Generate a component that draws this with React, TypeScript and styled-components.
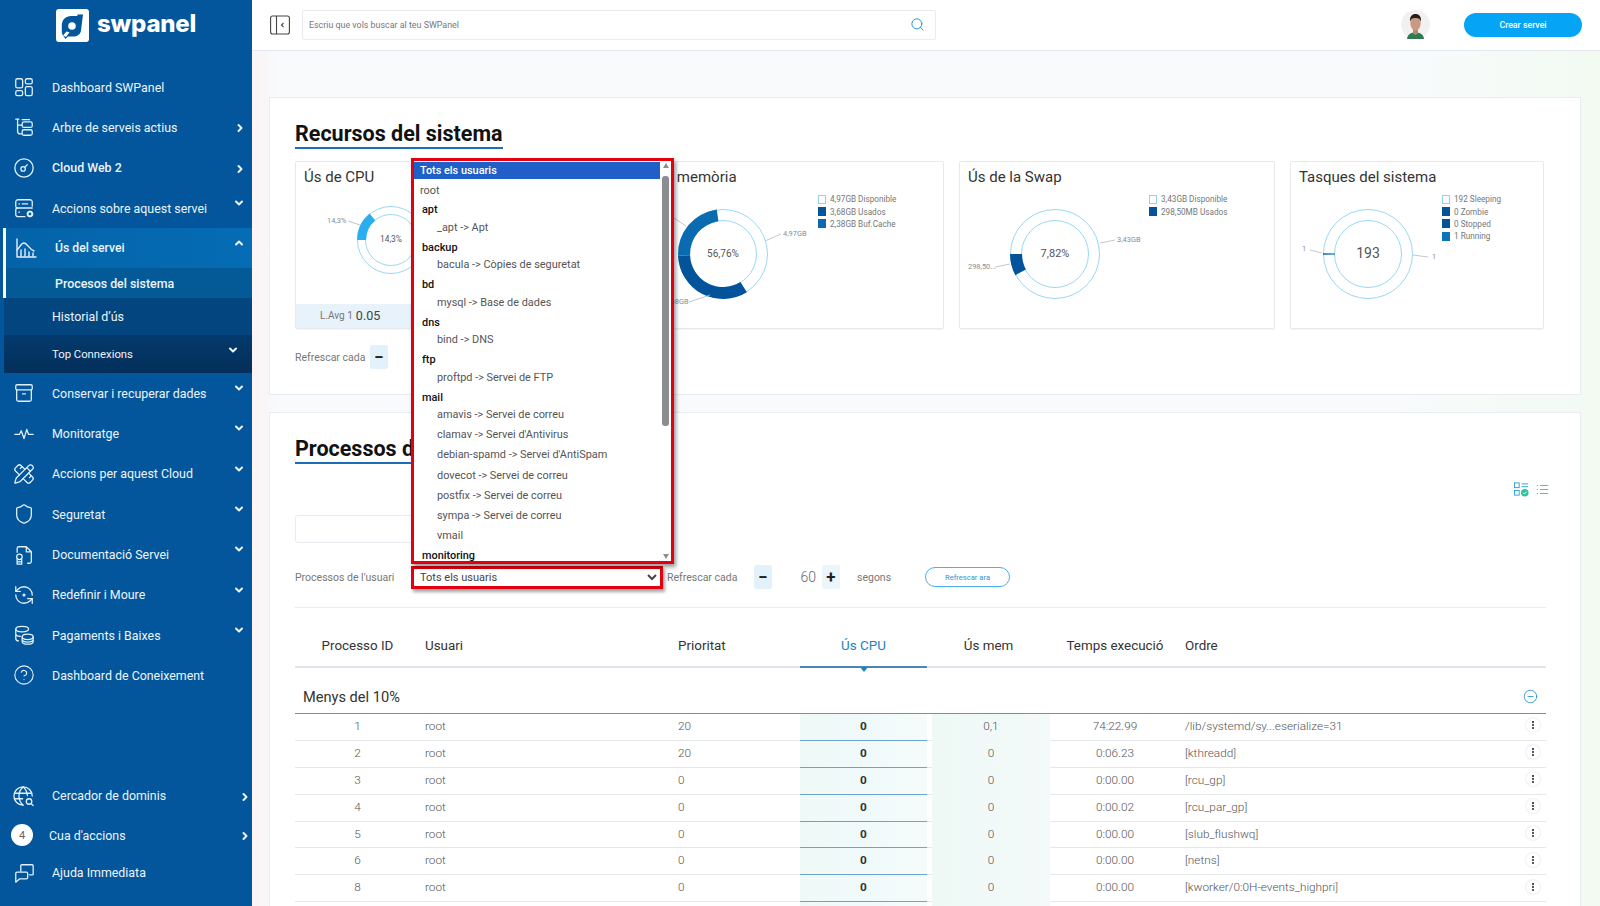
import React from 'react';
import styled, { createGlobalStyle, css } from 'styled-components';
import {
  ChevronDown,
  ChevronRight,
  ChevronUp,
  CircleHelp,
  CircleMinus,
  EllipsisVertical,
  PencilRuler,
  RefreshCcwDot,
  Search,
  Shield,
} from 'lucide-react';

const GlobalStyle = createGlobalStyle`
  html, body { margin: 0; padding: 0; height: 100%; }
  body { font-family: Roboto, "Liberation Sans", sans-serif; color: #333; background: #fff; }
  * { box-sizing: border-box; }
`;

const Shell = styled.div`
  display: flex;
  width: 1600px;
  height: 906px;
  overflow: hidden;
`;

/* ---------- sidebar ---------- */

const Sidebar = styled.aside`
  flex: 0 0 252px;
  display: flex;
  flex-direction: column;
  background: #03569b;
  color: #edf4fa;
  padding-bottom: 15px;
`;

const LogoRow = styled.div`
  height: 67px;
  display: flex;
  align-items: flex-start;
  gap: 8px;
  padding: 9px 0 0 56px;
`;

const LogoText = styled.span`
  font-family: Inter, Roboto, sans-serif;
  font-weight: 800;
  font-size: 24px;
  line-height: 29px;
  color: #fff;
  letter-spacing: -0.2px;
`;

const NavIcon = styled.span`
  flex: 0 0 39px;
  display: flex;
  align-items: center;
  color: #e4f0f9;
`;

const NavRow = styled.div<{ $active?: boolean; $strong?: boolean; $h?: number }>`
  height: ${(p) => p.$h ?? 40.3}px;
  display: flex;
  align-items: center;
  padding: 0 5px 0 13px;
  font-size: 12.4px;
  font-weight: ${(p) => (p.$strong ? 500 : 400)};
  ${(p) =>
    p.$active &&
    css`
      margin-left: 3px;
      padding-left: 8px;
      border-left: 3px solid #fff;
      font-size: 12.2px;
      background: linear-gradient(90deg, #0463a8, #056cb5);
      ${NavIcon} {
        flex-basis: 41px;
      }
    `}
`;

const NavLabel = styled.span`
  flex: 1;
  white-space: nowrap;
`;

const ChevronDownSlot = styled.span`
  align-self: flex-start;
  margin: 9px 2px 0 0;
  display: flex;
`;

const ChevronRightSlot = styled.span<{ $far?: boolean }>`
  margin: 2px ${(p) => (p.$far ? -4 : 1)}px 0 0;
  display: flex;
`;

const SubRow = styled.div<{ $tone: 'current' | 'dark' | 'darker'; $h: number }>`
  height: ${(p) => p.$h}px;
  margin-left: ${(p) => (p.$tone === 'current' ? 3 : 4)}px;
  display: flex;
  align-items: center;
  font-size: ${(p) => (p.$tone === 'darker' ? 11.3 : 12.4)}px;
  padding-left: ${(p) => (p.$tone === 'current' ? 49 : 48)}px;
  padding-right: 13px;
  font-weight: ${(p) => (p.$tone === 'current' ? 500 : 400)};
  border-left: ${(p) => (p.$tone === 'current' ? '3px solid #fff' : '0')};
  background: ${(p) =>
    p.$tone === 'current' ? '#045a97' : p.$tone === 'dark' ? '#03467f' : 'linear-gradient(#033a6d, #032f5a)'};
`;

const SubChevron = styled.span`
  margin: -9px 0 0 auto;
  display: flex;
`;

const SideSpacer = styled.div`
  flex: 1;
`;

const Badge = styled.span`
  width: 22px;
  height: 22px;
  margin-left: -2px;
  margin-right: 16px;
  flex: none;
  display: flex;
  align-items: center;
  justify-content: center;
  border-radius: 50%;
  background: #fff;
  color: #666;
  font-size: 11px;
`;

/* ---------- main column ---------- */

const Main = styled.main`
  flex: 1;
  display: flex;
  flex-direction: column;
  min-width: 0;
  background:
    linear-gradient(90deg, #fcf3f4 0, rgba(247, 250, 252, 0) 2%),
    linear-gradient(90deg, #f8fafc 0, #f8fafc 85%, #f3faf2 100%);
`;

const Topbar = styled.header`
  flex: 0 0 51px;
  display: flex;
  align-items: center;
  padding: 0 18px 1px 18px;
  background: #fff;
  border-bottom: 1px solid #e4e9f1;
`;

const SearchBox = styled.div`
  width: 634px;
  height: 30px;
  margin-left: 12px;
  display: flex;
  align-items: center;
  justify-content: space-between;
  padding: 0 10px 0 6px;
  border: 1px solid #e8ecf0;
  border-radius: 2px;
  font-size: 8.9px;
  color: #777;
`;

const Avatar = styled.span`
  margin-left: auto;
  display: flex;
`;

const CreateButton = styled.button`
  width: 118px;
  height: 24px;
  margin-left: 34px;
  border: 0;
  border-radius: 12px;
  background: #05a4f5;
  color: #fff;
  font: 500 8.8px Roboto, sans-serif;
`;

const Content = styled.div`
  flex: 1;
  padding: 46px 19px 0 17px;
  display: flex;
  flex-direction: column;
  gap: 17px;
`;

const Card = styled.section<{ $h?: number }>`
  ${(p) => p.$h && `height: ${p.$h}px;`}
  flex: none;
  background: #fff;
  border: 1px solid #e9edf2;
  padding: 23px 34px 0 25px;
`;

const Title = styled.h2`
  display: inline-block;
  margin: 0;
  font-size: 21.5px;
  line-height: 26px;
  font-weight: 700;
  color: #111;
  border-bottom: 2px solid #1c6fb5;
`;

const ChartRow = styled.div`
  display: flex;
  gap: 15px;
  margin-top: 12px;
  height: 168px;
`;

const ChartCard = styled.div<{ $w: number }>`
  flex: 0 0 ${(p) => p.$w}px;
  display: flex;
  flex-direction: column;
  border: 1px solid #e6eaef;
  border-radius: 2px;
  box-shadow: 0 1px 1px rgba(20, 50, 80, 0.05);
`;

const ChartTitle = styled.h3`
  margin: 0;
  height: 29px;
  padding: 6px 0 0 8px;
  font-size: 15px;
  line-height: 19px;
  font-weight: 400;
  color: #333;
  white-space: nowrap;
`;

const ChartBody = styled.div`
  flex: 1;
  display: flex;
  min-height: 0;
`;

const Legend = styled.ul`
  list-style: none;
  margin: 2px 0 0;
  padding: 0;
`;

const LegendItem = styled.li`
  height: 12.4px;
  display: flex;
  align-items: center;
  gap: 4px;
  font-size: 8.2px;
  color: #777;
  white-space: nowrap;
`;

const Swatch = styled.i<{ $color?: string }>`
  width: 8px;
  height: 9px;
  background: ${(p) => p.$color ?? '#fff'};
  border: 1px solid ${(p) => p.$color ?? '#8ed3f0'};
`;

const ChartFooter = styled.div`
  flex: 0 0 24px;
  display: flex;
  align-items: center;
  padding-left: 24px;
  padding-bottom: 2px;
  gap: 3px;
  background: #e7f2fa;
  font-size: 10px;
  color: #777;
`;

const FooterValue = styled.b`
  font-weight: 400;
  font-size: 12.6px;
  color: #444;
`;

const RefreshRow = styled.div`
  display: flex;
  align-items: center;
  margin-top: 16px;
`;

const ControlLabel = styled.span<{ $w: number }>`
  flex: 0 0 ${(p) => p.$w}px;
  font-size: 10.5px;
  color: #777;
  white-space: nowrap;
`;

const Stepper = styled.div`
  flex: 0 0 86px;
  height: 24px;
  display: flex;
  align-items: center;
  justify-content: flex-end;
  background: #fff;
  font-size: 14px;
  font-weight: 300;
  color: #666;
`;

const StepButton = styled.span<{ $side: 'minus' | 'plus' }>`
  flex: 0 0 18px;
  height: 24px;
  display: flex;
  align-items: center;
  justify-content: center;
  font-size: 17px;
  font-weight: 700;
  line-height: 1;
  color: #222;
  background: ${(p) => (p.$side === 'minus' ? '#e3f2fa' : '#ebf6fb')};
  border-radius: 2px;
`;

const StepValue = styled.span`
  flex: 1;
  text-align: right;
  padding-right: 6px;
`;

const Seconds = styled.span`
  margin-left: 17px;
  width: 68px;
  font-size: 10.5px;
  color: #777;
`;

const RefreshNow = styled.button`
  width: 85px;
  height: 20px;
  border: 1px solid #4eb0e6;
  border-radius: 10px;
  background: #fff;
  color: #2b97d6;
  font: 400 7.6px Roboto, sans-serif;
`;

const ViewIcons = styled.div`
  height: 16px;
  margin: 17px -3px 0 0;
  display: flex;
  justify-content: flex-end;
  align-items: center;
  gap: 7px;
`;

const FilterInput = styled.div`
  width: 270px;
  height: 28px;
  margin-top: 18px;
  border: 1px solid #e8ecf0;
  border-radius: 3px;
`;

const Controls = styled.div`
  height: 24px;
  margin-top: 22px;
  display: flex;
  align-items: center;
`;

const SelectWrap = styled.div`
  position: relative;
  flex: 0 0 252px;
  height: 23px;
  margin-right: 4px;
`;

const NativeSelect = styled.select`
  width: 100%;
  height: 100%;
  padding: 0 2px 0 2px;
  border: 3px solid #e3000f;
  border-radius: 0;
  outline: 0;
  background: #fff;
  box-shadow: 2px 3px 3px rgba(0, 0, 0, 0.35);
  font: 400 11px Roboto, sans-serif;
  color: #444;
`;

/* popup list of the native select, open above it */
const Popup = styled.div`
  position: absolute;
  left: 0;
  bottom: 25px;
  width: 263px;
  height: 406px;
  z-index: 5;
  display: flex;
  background: #fff;
  border: 3px solid #e3000f;
  box-shadow: 2px 3px 4px rgba(0, 0, 0, 0.4);
`;

const OptionList = styled.div`
  flex: 1;
  overflow: hidden;
  padding-top: 1px;
  font-size: 10.9px;
  min-width: 0;
`;

const Selected = styled.div`
  height: 17px;
  line-height: 17px;
  padding-left: 6px;
  background: #1f5fc7;
  color: #fff;
  font-weight: 500;
`;

const Root = styled.div`
  height: 17.7px;
  line-height: 17.7px;
  margin-top: 3px;
  padding-left: 6px;
  color: #555;
`;

const GroupLabel = styled.div`
  height: 17.7px;
  line-height: 17.7px;
  margin-top: 2.1px;
  padding-left: 8px;
  font-weight: 500;
  color: #111;
`;

const GroupOption = styled.div`
  height: 17.7px;
  line-height: 17.7px;
  padding-left: 23px;
  color: #555;
  & + & {
    margin-top: 2.4px;
  }
`;

const ScrollTrack = styled.div`
  flex: 0 0 11px;
  display: flex;
  flex-direction: column;
  align-items: center;
  justify-content: space-between;
  padding: 2px 0;
`;

const ScrollThumb = styled.div`
  width: 7px;
  height: 250px;
  margin-top: 8px;
  border-radius: 3px;
  background: #8b8d90;
`;

const ScrollGap = styled.div`
  flex: 1;
`;

const ScrollArrow = styled.i<{ $up?: boolean }>`
  width: 0;
  height: 0;
  border-left: 3.5px solid transparent;
  border-right: 3.5px solid transparent;
  ${(p) => (p.$up ? 'border-bottom' : 'border-top')}: 5px solid #8b8d90;
`;

const Divider = styled.hr`
  margin: 18px 0 0;
  border: 0;
  border-top: 1px solid #e8ecf1;
`;

const gridColumns = css`
  display: grid;
  grid-template-columns: 125px 253px 127px 127px 123px 130px 1fr 26px;
`;

const HeadRow = styled.div`
  ${gridColumns}
  height: 60px;
  border-bottom: 2px solid #dfe4ef;
  font-size: 13.4px;
  color: #333;
`;

const HeadCell = styled.div<{ $left?: boolean; $active?: boolean }>`
  position: relative;
  display: flex;
  align-items: center;
  justify-content: ${(p) => (p.$left ? 'flex-start' : 'center')};
  padding: 16px 0 0 ${(p) => (p.$left ? 5 : 0)}px;
  white-space: nowrap;
  ${(p) =>
    p.$active &&
    css`
      color: #1a84c4;
      margin-bottom: -2px;
      border-bottom: 2px solid #4b86b8;
      &::after {
        content: '';
        position: absolute;
        left: 50%;
        bottom: -6px;
        margin-left: -4px;
        border-left: 4px solid transparent;
        border-right: 4px solid transparent;
        border-top: 5px solid #1a84c4;
      }
    `}
`;

const GroupRow = styled.div`
  height: 46px;
  display: flex;
  align-items: center;
  justify-content: space-between;
  padding: 12px 8px 0;
  border-bottom: 1px solid #858d92;
  font-size: 14.6px;
  color: #333;
`;

const TableRow = styled.div`
  ${gridColumns}
  height: 26.9px;
  border-bottom: 1px solid #e3e8ef;
  font-size: 11.8px;
  font-weight: 300;
  color: #555;
`;

const Cell = styled.div<{ $left?: boolean }>`
  display: flex;
  align-items: center;
  justify-content: ${(p) => (p.$left ? 'flex-start' : 'center')};
  padding: 0 0 2px ${(p) => (p.$left ? 5 : 0)}px;
  white-space: nowrap;
`;

const CpuCell = styled(Cell)`
  margin-bottom: -1px;
  background: linear-gradient(90deg, #eff9f8, #f1fafa 60%, #f5fbfb);
  border-bottom: 1px solid #6fa3c9;
  font-weight: 700;
  color: #333;
`;

const MemCell = styled(Cell)`
  margin-left: 5px;
  margin-bottom: -1px;
  padding-bottom: 3px;
  background: linear-gradient(90deg, #eef9f6, #f3faf9);
`;

const Kebab = styled.span`
  width: 14px;
  height: 14px;
  margin-top: -1px;
  display: flex;
  align-items: center;
  justify-content: center;
  border-radius: 50%;
  background: #fff;
  box-shadow: 0 0 2px rgba(0, 0, 0, 0.18);
  color: #222;
`;

/* ---------- drawings ---------- */

const Stroke = ({ children, size = 22 }: { children: React.ReactNode; size?: number }) => (
  <svg width={size} height={size} viewBox="0 0 24 24" fill="none" stroke="currentColor" strokeWidth="1.4" strokeLinecap="round" strokeLinejoin="round">
    {children}
  </svg>
);

const icons: Record<string, React.ReactNode> = {
  dashboard: (
    <Stroke>
      <rect x="3" y="3" width="7.5" height="10" rx="1.8" />
      <rect x="13.5" y="3" width="7.5" height="5.5" rx="1.8" />
      <rect x="3" y="16" width="7.5" height="5.5" rx="1.8" />
      <rect x="13.5" y="11.5" width="7.5" height="10" rx="1.8" />
    </Stroke>
  ),
  tree: (
    <Stroke>
      <path d="M3 3.5h3.5M5 3.5v13a3 3 0 0 0 3 3h2M5 10h5" />
      <rect x="10" y="6.5" width="11" height="6" rx="2" />
      <rect x="10" y="15" width="11" height="6" rx="2" />
      <path d="M10 4h8" />
    </Stroke>
  ),
  gauge: (
    <Stroke>
      <circle cx="12" cy="12" r="10" />
      <circle cx="11" cy="13" r="2.4" />
      <path d="M13 11l2.5-2.5" />
    </Stroke>
  ),
  server: (
    <Stroke>
      <path d="M21 10V5.5A2.5 2.5 0 0 0 18.500 3h-13A2.500 2.500 0 0 0 3 5.500V10a2 2 0 0 0 2 2h16" />
      <path d="M5 12a2 2 0 0 0-2 2v5a2.500 2.500 0 0 0 2.500 2.500H13" />
      <path d="M6.500 7.500h.5M6.500 16.500h.5M10 7.500h6" />
      <circle cx="18.500" cy="18.500" r="2.600" strokeWidth="2.200" strokeDasharray="1.700 0.900" />
    </Stroke>
  ),
  usage: (
    <Stroke size={24}>
      <path d="M3 3v18h19" />
      <path d="M3 14c3-3 4-7 7-7s5 6 10 8" />
      <path d="M7 20v-6M11 20v-7M15 20v-4M19 20v-3" />
    </Stroke>
  ),
  archive: (
    <Stroke>
      <rect x="3" y="3" width="18" height="5.500" rx="1.500" />
      <path d="M4 8.500V19a2 2 0 0 0 2 2h12a2 2 0 0 0 2-2V8.500M10.500 13h3" />
    </Stroke>
  ),
  pulse: (
    <Stroke>
      <path d="M2 12.500h5l2-4 3 8.500 3-10 2 5.500h5" />
    </Stroke>
  ),
  tools: <PencilRuler size={22} strokeWidth={1.4} />,
  shield: <Shield size={22} strokeWidth={1.4} />,
  doc: (
    <Stroke>
      <path d="M4.500 9V5a2 2 0 0 1 2-2h8l5.500 5.500V19a2 2 0 0 1-2 2h-2M14.500 3v5.500H20" />
      <circle cx="7" cy="14" r="3" />
      <path d="M4.500 22v-5.500M9.500 22v-5.500M4.500 19.500h5M4.500 22h5" />
    </Stroke>
  ),
  refresh: <RefreshCcwDot size={22} strokeWidth={1.4} />,
  pay: (
    <Stroke>
      <ellipse cx="10" cy="5.500" rx="7" ry="3" />
      <path d="M3 5.500v10a3 3 0 0 0 3 3M3 10.500c0 1.500 2 2.700 5 3" />
      <ellipse cx="16" cy="14" rx="6" ry="3" />
      <path d="M10 14v5c0 1.700 2.700 3 6 3s6-1.300 6-3v-5M10 17c0 1.500 2.700 2.700 6 2.700s6-1.200 6-2.700" />
    </Stroke>
  ),
  help: <CircleHelp size={22} strokeWidth={1.2} />,
  domains: (
    <Stroke>
      <path d="M11 22a10 10 0 1 1 10-10" />
      <path d="M11 2c-6 5.500-6 14.500 0 20M11 2c3 2.800 4.500 6 4.700 9.500M1.500 9h19M1.500 15h9" />
      <circle cx="17.500" cy="18" r="3" />
      <path d="M20 20.500l2 2" />
    </Stroke>
  ),
  chat: (
    <Stroke>
      <path d="M8.500 10V4a1 1 0 0 1 1-1H21a1 1 0 0 1 1 1v9a1 1 0 0 1-1 1h-3" />
      <path d="M3 22v-9.500a1.500 1.500 0 0 1 1.500-1.500h10a1.500 1.500 0 0 1 1.500 1.500V17a1.500 1.500 0 0 1-1.500 1.500H7z" />
    </Stroke>
  ),
};

const LogoMark = () => (
  <svg width="33" height="33" viewBox="0 0 33 33">
    <rect width="33" height="33" rx="3" fill="#fff" />
    <path
      fill="#03569b"
      d="M21.500 5.500h5.500l-2 16c-.6 4-4 6-8 6h-5l-2.500 2.500-2.500-3.500c-1-1.300-1.200-3-1.200-5v-5C5.800 10.500 10 7 15 7h6.300z"
    />
    <circle cx="16" cy="17" r="3.800" fill="#fff" />
    <path d="M7 26.500l3.500-4 3 .8-3.500 4.700z" fill="#fff" />
  </svg>
);

const AvatarFace = () => (
  <svg width="29" height="29" viewBox="0 0 29 29">
    <circle cx="14.500" cy="14.500" r="14.500" fill="#f3f1f0" />
    <path d="M6 29c.5-5 4-6.500 8.500-6.500S22.500 24 23 29z" fill="#2f7a50" />
    <path d="M12 19h5v4.500l-2.500 1.500-2.500-1.500z" fill="#b98670" />
    <ellipse cx="14.500" cy="13" rx="5.200" ry="7.400" fill="#c99a82" />
    <path d="M9 11.500C8.500 6.500 11 4 14.500 4s6 2.500 5.500 7.500c-1-2.500-2-3.500-5.500-3.500S10 9 9 11.500z" fill="#251d19" />
  </svg>
);

const polar = (cx: number, cy: number, r: number, deg: number) => {
  const a = ((deg - 90) * Math.PI) / 180;
  return [cx + r * Math.cos(a), cy + r * Math.sin(a)];
};

const arc = (cx: number, cy: number, ro: number, ri: number, from: number, to: number) => {
  const [x1, y1] = polar(cx, cy, ro, from);
  const [x2, y2] = polar(cx, cy, ro, to);
  const [x3, y3] = polar(cx, cy, ri, to);
  const [x4, y4] = polar(cx, cy, ri, from);
  const large = to - from > 180 ? 1 : 0;
  return `M${x1} ${y1}A${ro} ${ro} 0 ${large} 1 ${x2} ${y2}L${x3} ${y3}A${ri} ${ri} 0 ${large} 0 ${x4} ${y4}Z`;
};

type Donut = {
  w: number;
  cx: number;
  cy: number;
  ro: number;
  ri: number;
  center: string;
  centerSize: number;
  segments: { from: number; to: number; color: string }[];
  labels: { x: number; y: number; text: string; line: string; size?: number }[];
};

const DonutSvg = styled.svg`
  flex: none;
`;

const DonutChart = ({ w, cx, cy, ro, ri, center, centerSize, segments, labels }: Donut) => (
  <DonutSvg width={w} height={120}>
    <circle cx={cx} cy={cy} r={ro - 0.5} fill="none" stroke="#8fd3f0" strokeWidth="0.9" />
    <circle cx={cx} cy={cy} r={ri + 0.5} fill="none" stroke="#8fd3f0" strokeWidth="0.9" />
    {segments.map((s) => (
      <path key={s.from} d={arc(cx, cy, ro, ri, s.from, s.to)} fill={s.color} />
    ))}
    {labels.map((l) => (
      <g key={l.text + l.x}>
        <path d={l.line} fill="none" stroke="#b5b9bd" strokeWidth="0.8" />
        <text x={l.x} y={l.y} fontSize={l.size ?? 7.4} fill="#8a8d90" fontFamily="Roboto, sans-serif" dominantBaseline="middle">
          {l.text}
        </text>
      </g>
    ))}
    <text x={cx} y={cy} fontSize={centerSize} fill="#555" fontFamily="Roboto, sans-serif" textAnchor="middle" dominantBaseline="middle">
      {center}
    </text>
  </DonutSvg>
);

/* ---------- data ---------- */

const sideTop: { label: string; icon: string; arrow?: 'right' | 'down'; strong?: boolean }[] = [
  { label: 'Dashboard SWPanel', icon: 'dashboard' },
  { label: 'Arbre de serveis actius', icon: 'tree', arrow: 'right' },
  { label: 'Cloud Web 2', icon: 'gauge', arrow: 'right', strong: true },
  { label: 'Accions sobre aquest servei', icon: 'server', arrow: 'down' },
];

const sideMiddle: { label: string; icon: string; arrow?: 'down' }[] = [
  { label: 'Conservar i recuperar dades', icon: 'archive', arrow: 'down' },
  { label: 'Monitoratge', icon: 'pulse', arrow: 'down' },
  { label: 'Accions per aquest Cloud', icon: 'tools', arrow: 'down' },
  { label: 'Seguretat', icon: 'shield', arrow: 'down' },
  { label: 'Documentació Servei', icon: 'doc', arrow: 'down' },
  { label: 'Redefinir i Moure', icon: 'refresh', arrow: 'down' },
  { label: 'Pagaments i Baixes', icon: 'pay', arrow: 'down' },
  { label: 'Dashboard de Coneixement', icon: 'help' },
];

const groups: { name: string; options: string[] }[] = [
  { name: 'apt', options: ['_apt -> Apt'] },
  { name: 'backup', options: ['bacula -> Còpies de seguretat'] },
  { name: 'bd', options: ['mysql -> Base de dades'] },
  { name: 'dns', options: ['bind -> DNS'] },
  { name: 'ftp', options: ['proftpd -> Servei de FTP'] },
  {
    name: 'mail',
    options: [
      'amavis -> Servei de correu',
      "clamav -> Servei d'Antivirus",
      "debian-spamd -> Servei d'AntiSpam",
      'dovecot -> Servei de correu',
      'postfix -> Servei de correu',
      'sympa -> Servei de correu',
      'vmail',
    ],
  },
  { name: 'monitoring', options: [] },
];

const rows = [
  ['1', 'root', '20', '0', '0,1', '74:22.99', '/lib/systemd/sy...eserialize=31'],
  ['2', 'root', '20', '0', '0', '0:06.23', '[kthreadd]'],
  ['3', 'root', '0', '0', '0', '0:00.00', '[rcu_gp]'],
  ['4', 'root', '0', '0', '0', '0:00.02', '[rcu_par_gp]'],
  ['5', 'root', '0', '0', '0', '0:00.00', '[slub_flushwq]'],
  ['6', 'root', '0', '0', '0', '0:00.00', '[netns]'],
  ['8', 'root', '0', '0', '0', '0:00.00', '[kworker/0:0H-events_highpri]'],
  // the next row only shows its tinted cells above the fold
  ['', '', '', '', '', '', ''],
];

const App = () => (
  <Shell>
    <GlobalStyle />
    <Sidebar>
      <LogoRow>
        <LogoMark />
        <LogoText>swpanel</LogoText>
      </LogoRow>
      {sideTop.map((item) => (
        <NavRow key={item.label} $strong={item.strong}>
          <NavIcon>{icons[item.icon]}</NavIcon>
          <NavLabel>{item.label}</NavLabel>
          {item.arrow === 'right' && (
            <ChevronRightSlot>
              <ChevronRight size={12} strokeWidth={4} />
            </ChevronRightSlot>
          )}
          {item.arrow === 'down' && (
            <ChevronDownSlot>
              <ChevronDown size={12} strokeWidth={4} />
            </ChevronDownSlot>
          )}
        </NavRow>
      ))}
      <NavRow $active $strong $h={40}>
        <NavIcon>{icons.usage}</NavIcon>
        <NavLabel>Ús del servei</NavLabel>
        <ChevronDownSlot>
          <ChevronUp size={12} strokeWidth={4} />
        </ChevronDownSlot>
      </NavRow>
      <SubRow $tone="current" $h={30}>Procesos del sistema</SubRow>
      <SubRow $tone="dark" $h={37}>Historial d’ús</SubRow>
      <SubRow $tone="darker" $h={38}>
        Top Connexions
        <SubChevron>
          <ChevronDown size={12} strokeWidth={4} />
        </SubChevron>
      </SubRow>
      {sideMiddle.map((item) => (
        <NavRow key={item.label}>
          <NavIcon>{icons[item.icon]}</NavIcon>
          <NavLabel>{item.label}</NavLabel>
          {item.arrow && (
            <ChevronDownSlot>
              <ChevronDown size={12} strokeWidth={4} />
            </ChevronDownSlot>
          )}
        </NavRow>
      ))}
      <SideSpacer />
      <NavRow>
        <NavIcon>{icons.domains}</NavIcon>
        <NavLabel>Cercador de dominis</NavLabel>
        <ChevronRightSlot $far>
          <ChevronRight size={12} strokeWidth={4} />
        </ChevronRightSlot>
      </NavRow>
      <NavRow $h={38}>
        <Badge>4</Badge>
        <NavLabel>Cua d'accions</NavLabel>
        <ChevronRightSlot $far>
          <ChevronRight size={12} strokeWidth={4} />
        </ChevronRightSlot>
      </NavRow>
      <NavRow $h={37}>
        <NavIcon>{icons.chat}</NavIcon>
        <NavLabel>Ajuda Immediata</NavLabel>
      </NavRow>
    </Sidebar>

    <Main>
      <Topbar>
        <svg width="20" height="20" viewBox="0 0 20 20" fill="none" stroke="#444" strokeWidth="1.1">
          <rect x="0.600" y="1" width="18.800" height="18" rx="2" />
          <path d="M6.500 1v18M13.500 8l-2 2 2 2" />
        </svg>
        <SearchBox>
          <span>Escriu que vols buscar al teu SWPanel</span>
          <Search size={15} color="#1f9ad6" strokeWidth={1.6} />
        </SearchBox>
        <Avatar>
          <AvatarFace />
        </Avatar>
        <CreateButton>Crear servei</CreateButton>
      </Topbar>

      <Content>
        <Card $h={298}>
          <Title>Recursos del sistema</Title>
          <ChartRow>
            <ChartCard $w={301}>
              <ChartTitle>Ús de CPU</ChartTitle>
              <ChartBody>
                <DonutChart
                  w={200}
                  cx={95}
                  cy={49}
                  ro={34}
                  ri={25}
                  center="14,3%"
                  centerSize={8.4}
                  segments={[{ from: 270, to: 321, color: '#29aef0' }]}
                  labels={[{ x: 31, y: 30, text: '14,3%', line: 'M52 30l12 4' }]}
                />
              </ChartBody>
              <ChartFooter>
                L.Avg 1 <FooterValue>0.05</FooterValue>
              </ChartFooter>
            </ChartCard>
            <ChartCard $w={333}>
              <ChartTitle>Ús de la memòria</ChartTitle>
              <ChartBody>
                <DonutChart
                  w={206}
                  cx={111}
                  cy={63}
                  ro={45}
                  ri={33}
                  center="56,76%"
                  centerSize={10}
                  segments={[
                    { from: 148, to: 268, color: '#03539a' },
                    { from: 268, to: 352, color: '#0a6bb0' },
                  ]}
                  labels={[
                    { x: 171, y: 43, text: '4,97GB', line: 'M153 50l16-7' },
                    { x: 53, y: 111, text: '3,68GB', line: 'M77 111l21-7' },
                    { x: 38, y: 27, text: '2,38GB', line: 'M62 27l12 8' },
                  ]}
                />
                <Legend>
                  <LegendItem><Swatch />4,97GB Disponible</LegendItem>
                  <LegendItem><Swatch $color="#03539a" />3,68GB Usados</LegendItem>
                  <LegendItem><Swatch $color="#0a6bb0" />2,38GB Buf.Cache</LegendItem>
                </Legend>
              </ChartBody>
            </ChartCard>
            <ChartCard $w={316}>
              <ChartTitle>Ús de la Swap</ChartTitle>
              <ChartBody>
                <DonutChart
                  w={189}
                  cx={95}
                  cy={63}
                  ro={45}
                  ri={33}
                  center="7,82%"
                  centerSize={11}
                  segments={[{ from: 242, to: 270, color: '#03539a' }]}
                  labels={[
                    { x: 157, y: 49, text: '3,43GB', line: 'M140 52l15-3' },
                    { x: 8, y: 76, text: '298,50...', line: 'M35 76l15-3' },
                  ]}
                />
                <Legend>
                  <LegendItem><Swatch />3,43GB Disponible</LegendItem>
                  <LegendItem><Swatch $color="#03539a" />298,50MB Usados</LegendItem>
                </Legend>
              </ChartBody>
            </ChartCard>
            <ChartCard $w={254}>
              <ChartTitle>Tasques del sistema</ChartTitle>
              <ChartBody>
                <DonutChart
                  w={151}
                  cx={77}
                  cy={63}
                  ro={45}
                  ri={33}
                  center="193"
                  centerSize={14}
                  segments={[{ from: 269, to: 271, color: '#0a5fa6' }]}
                  labels={[
                    { x: 11, y: 58, text: '1', line: 'M19 59l12 3' },
                    { x: 141, y: 66, text: '1', line: 'M122 64l15 2' },
                  ]}
                />
                <Legend>
                  <LegendItem><Swatch />192 Sleeping</LegendItem>
                  <LegendItem><Swatch $color="#03539a" />0 Zombie</LegendItem>
                  <LegendItem><Swatch $color="#03539a" />0 Stopped</LegendItem>
                  <LegendItem><Swatch $color="#0a75b8" />1 Running</LegendItem>
                </Legend>
              </ChartBody>
            </ChartCard>
          </ChartRow>
          <RefreshRow>
            <ControlLabel $w={75}>Refrescar cada</ControlLabel>
            <Stepper>
              <StepButton $side="minus">−</StepButton>
              <StepValue>60</StepValue>
              <StepButton $side="plus">+</StepButton>
            </Stepper>
            <Seconds>segons</Seconds>
            <RefreshNow>Refrescar ara</RefreshNow>
          </RefreshRow>
        </Card>

        <Card>
          <Title>Processos del sistema</Title>
          <ViewIcons>
            <svg width="15" height="15" viewBox="0 0 16 16" fill="none" stroke="#2f9fd3" strokeWidth="1">
              <rect x="0.500" y="1" width="5" height="5" />
              <rect x="0.500" y="9" width="5" height="5" />
              <path d="M8 2h7M8 5h7M8 10h1" />
              <circle cx="11.500" cy="11.500" r="4" fill="#2ec4a0" stroke="none" />
              <path d="M9.800 11.500l1.300 1.300 2.200-2.400" stroke="#fff" />
            </svg>
            <svg width="13" height="13" viewBox="0 0 16 16" fill="none" stroke="#2f9fd3" strokeWidth="1">
              <path d="M5 3h10M5 8h10M5 13h10" />
              <path d="M1 3h1.500M1 8h1.500M1 13h1.500" />
            </svg>
          </ViewIcons>
          <FilterInput />
          <Controls>
            <ControlLabel $w={116}>Processos de l'usuari</ControlLabel>
            <SelectWrap>
              <NativeSelect>
                <option>Tots els usuaris</option>
              </NativeSelect>
              <Popup>
                <OptionList>
                  <Selected>Tots els usuaris</Selected>
                  <Root>root</Root>
                  {groups.map((g) => (
                    <div key={g.name}>
                      <GroupLabel>{g.name}</GroupLabel>
                      {g.options.map((o) => (
                        <GroupOption key={o}>{o}</GroupOption>
                      ))}
                    </div>
                  ))}
                </OptionList>
                <ScrollTrack>
                  <ScrollArrow $up />
                  <ScrollThumb />
                  <ScrollGap />
                  <ScrollArrow />
                </ScrollTrack>
              </Popup>
            </SelectWrap>
            <ControlLabel $w={87}>Refrescar cada</ControlLabel>
            <Stepper>
              <StepButton $side="minus">−</StepButton>
              <StepValue>60</StepValue>
              <StepButton $side="plus">+</StepButton>
            </Stepper>
            <Seconds>segons</Seconds>
            <RefreshNow>Refrescar ara</RefreshNow>
          </Controls>
          <Divider />
          <HeadRow>
            <HeadCell>Processo ID</HeadCell>
            <HeadCell $left>Usuari</HeadCell>
            <HeadCell $left>Prioritat</HeadCell>
            <HeadCell $active>Ús CPU</HeadCell>
            <HeadCell>Ús mem</HeadCell>
            <HeadCell>Temps execució</HeadCell>
            <HeadCell $left>Ordre</HeadCell>
          </HeadRow>
          <GroupRow>
            Menys del 10%
            <CircleMinus size={15} color="#2a94cf" strokeWidth={1.4} />
          </GroupRow>
          {rows.map((r, i) => (
            <TableRow key={i}>
              <Cell>{r[0]}</Cell>
              <Cell $left>{r[1]}</Cell>
              <Cell $left>{r[2]}</Cell>
              <CpuCell>{r[3]}</CpuCell>
              <MemCell>{r[4]}</MemCell>
              <Cell>{r[5]}</Cell>
              <Cell $left>{r[6]}</Cell>
              <Cell>
                {r[0] && (
                  <Kebab>
                    <EllipsisVertical size={10} strokeWidth={3} />
                  </Kebab>
                )}
              </Cell>
            </TableRow>
          ))}
        </Card>
      </Content>
    </Main>
  </Shell>
);

export default App;
